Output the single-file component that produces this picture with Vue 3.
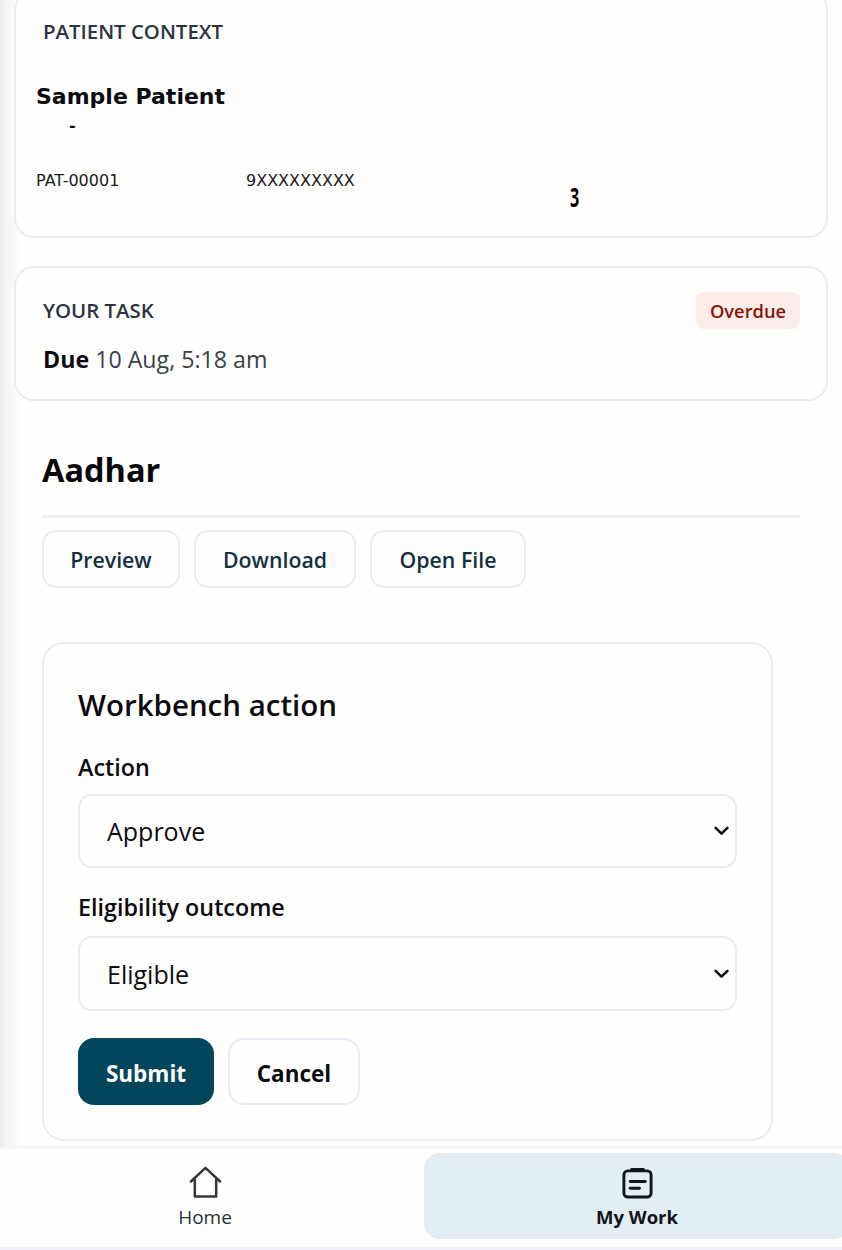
<script setup>
const actions = ['Preview', 'Download', 'Open File']
</script>

<template>
  <div class="app">
    <main class="main">
      <section class="card context">
        <h2 class="eyebrow">PATIENT CONTEXT</h2>
        <p class="name">Sample Patient</p>
        <p class="dash">-</p>
        <div class="ids">
          <span class="id-a">PAT-00001</span>
          <span class="id-b">9XXXXXXXXX</span>
          <span class="id-c">3</span>
        </div>
      </section>

      <section class="card task">
        <div class="task-head">
          <h2 class="eyebrow">YOUR TASK</h2>
          <span class="badge">Overdue</span>
        </div>
        <p class="due"><b>Due</b> 10 Aug, 5:18 am</p>
      </section>

      <section class="doc">
        <h1 class="doc-title">Aadhar</h1>
        <div class="doc-actions">
          <button v-for="a in actions" :key="a" class="ghost" type="button">{{ a }}</button>
        </div>
      </section>

      <form class="bench" @submit.prevent>
        <h3 class="bench-title">Workbench action</h3>
        <label class="field">
          <span class="label">Action</span>
          <span class="select-wrap a">
            <select class="select"><option>Approve</option></select>
            <svg class="chev" viewBox="0 0 14 9" fill="none" stroke="#101014" stroke-width="2.400" stroke-linecap="round" stroke-linejoin="round"><path d="M1.500 1.500 7 7l5.500-5.500" /></svg>
          </span>
        </label>
        <label class="field">
          <span class="label">Eligibility outcome</span>
          <span class="select-wrap b">
            <select class="select"><option>Eligible</option></select>
            <svg class="chev" viewBox="0 0 14 9" fill="none" stroke="#101014" stroke-width="2.400" stroke-linecap="round" stroke-linejoin="round"><path d="M1.500 1.500 7 7l5.500-5.500" /></svg>
          </span>
        </label>
        <div class="form-actions">
          <button class="submit" type="submit">Submit</button>
          <button class="cancel" type="button">Cancel</button>
        </div>
      </form>
    </main>

    <nav class="nav">
      <div class="tab">
        <svg class="icon" viewBox="0 0 34 34" fill="none" stroke="#36363c" stroke-width="2.600" stroke-linecap="round" stroke-linejoin="round">
          <path d="M2 16 17 2 32 16" />
          <path d="M6 14V31.500H28V14" />
        </svg>
        <span>Home</span>
      </div>
      <div class="tab active">
        <svg class="icon" viewBox="0 0 34 34" fill="none" stroke="#111418" stroke-width="3" stroke-linecap="round" stroke-linejoin="round">
          <rect x="3" y="5" width="28" height="27" rx="4" />
          <path d="M11 3.500H23" />
          <path d="M9.500 16H25" />
          <path d="M9.500 23H19" />
        </svg>
        <span>My Work</span>
      </div>
    </nav>
  </div>
</template>

<style>
html, body { margin: 0; background: #fefefd; }
</style>

<style scoped>
.app {
  width: 842px;
  height: 1250px;
  display: flex;
  flex-direction: column;
  overflow: hidden;
  font-family: "Open Sans", "Noto Sans", sans-serif;
  color: #0c0c10;
  background: linear-gradient(90deg, #ecebea 0, #f6f5f4 8px, #fefefd 22px);
}
.main {
  height: 1146px;
  overflow: hidden;
  padding: 0 14px;
  box-sizing: border-box;
}
.card {
  width: 814px;
  box-sizing: border-box;
  background: #fefefd;
  border: 2px solid #ecebf3;
  border-radius: 20px;
}
.context {
  height: 248px;
  margin-top: -10px;
  padding: 26px 20px 0;
}
.eyebrow {
  margin: 0;
  font-size: 20.400px;
  line-height: 26px;
  font-weight: 600;
  color: #2b3440;
}
.context .eyebrow { padding-left: 7px; }
.name {
  margin: 38px 0 0;
  font-family: "DejaVu Sans", sans-serif;
  font-size: 22px;
  font-weight: 700;
  line-height: 30px;
  color: #0b0b0f;
}
.dash {
  margin: 4px 0 0 33px;
  font-family: "DejaVu Sans", sans-serif;
  font-size: 16px;
  font-weight: 700;
  line-height: 20px;
}
.ids {
  display: flex;
  margin-top: 35px;
  font-family: "DejaVu Sans", sans-serif;
  font-size: 16px;
  line-height: 20px;
  color: #1a1a20;
}
.id-a { width: 210px; }
.id-b { width: 324px; }
.id-c {
  display: block;
  width: 9px;
  height: 26px;
  margin-top: 13px;
  font-family: "Open Sans", sans-serif;
  font-size: 26px;
  font-weight: 700;
  line-height: 26px;
  color: #000;
  transform: scaleX(0.62);
  transform-origin: left center;
}
.task {
  margin-top: 28px;
  height: 135px;
  padding: 24px 27px 0;
}
.task-head {
  display: flex;
  justify-content: space-between;
  align-items: flex-start;
  height: 37px;
}
.task-head .eyebrow { margin-top: 5px; }
.badge {
  width: 104px;
  height: 37px;
  margin-right: -1px;
  border-radius: 8px;
  background: #fcecea;
  color: #8a1308;
  font-size: 18.300px;
  font-weight: 600;
  line-height: 37px;
  text-align: center;
}
.due {
  margin: 14px 0 0;
  font-size: 23.200px;
  line-height: 32px;
  color: #3a3f48;
}
.due b { color: #0b0b0f; font-weight: 700; }
.doc { margin: 0 28px; width: 758px; }
.doc-title {
  margin: 0;
  padding-top: 47px;
  padding-bottom: 23px;
  border-bottom: 3px solid #f2f1f6;
  font-size: 32.500px;
  line-height: 44px;
  font-weight: 700;
  color: #07070a;
}
.doc-actions {
  display: flex;
  gap: 14px;
  margin-top: 12px;
}
.ghost {
  width: 138px;
  height: 58px;
  padding: 0;
  background: #fefefd;
  border: 2px solid #ecebf3;
  border-radius: 14px;
  font: 600 21.300px "Open Sans", sans-serif;
  color: #14303f;
}
.ghost:nth-child(2) { width: 162px; }
.ghost:nth-child(3) { width: 156px; }
.bench {
  width: 731px;
  height: 499px;
  box-sizing: border-box;
  margin: 54px 0 0 28px;
  padding: 39px 34px 0;
  background: #fefefd;
  border: 2px solid #ecebf3;
  border-radius: 22px;
}
.bench-title {
  margin: 0;
  font-size: 29.500px;
  line-height: 44px;
  font-weight: 600;
  color: #0c0c10;
}
.field { display: block; margin-top: 23px; }
.field + .field { margin-top: 22px; }
.label {
  display: block;
  font-size: 23.300px;
  line-height: 34px;
  font-weight: 600;
  color: #0c0c10;
}
.select-wrap {
  display: block;
  position: relative;
  width: 659px;
}
.select-wrap.a { margin-top: 10px; height: 74px; }
.select-wrap.b { margin-top: 12px; height: 75px; }
.select {
  display: block;
  width: 100%;
  height: 100%;
  padding: 0 40px 0 27px;
  appearance: none;
  background: #fefefd;
  border: 2px solid #ecebf3;
  border-radius: 14px;
  box-sizing: border-box;
  font: 400 25px "Open Sans", sans-serif;
  color: #0c0c10;
}
.chev {
  position: absolute;
  right: 8px;
  top: 50%;
  width: 15px;
  height: 10px;
  margin-top: -5px;
  pointer-events: none;
}
.form-actions {
  display: flex;
  gap: 14px;
  margin-top: 27px;
}
.submit, .cancel {
  height: 67px;
  padding: 3px 0 0;
  border-radius: 16px;
  font: 700 22.500px "Open Sans", sans-serif;
}
.submit {
  width: 136px;
  background: #03455a;
  border: 0;
  color: #fff;
}
.cancel {
  width: 132px;
  background: #fefefd;
  border: 2px solid #ecebf3;
  color: #0c0c10;
}
.nav {
  height: 98px;
  flex: none;
  display: flex;
  background: #fefefd;
  border-top: 3px solid #f6f6f8;
  border-bottom: 3px solid #f1effa;
}
.tab {
  width: 410px;
  flex: none;
  box-sizing: border-box;
  margin-top: 4px;
  padding-top: 4px;
  height: 86px;
  display: flex;
  flex-direction: column;
  align-items: center;
  justify-content: center;
  gap: 5px;
  font-size: 19px;
  line-height: 26px;
  font-weight: 500;
  color: #2a3038;
}
.tab.active {
  width: 426px;
  margin-left: 14px;
  background: #e2eef4;
  border-radius: 16px;
  font-size: 18.500px;
  font-weight: 700;
  color: #111418;
}
.icon { width: 33px; height: 33px; flex: none; }
</style>
